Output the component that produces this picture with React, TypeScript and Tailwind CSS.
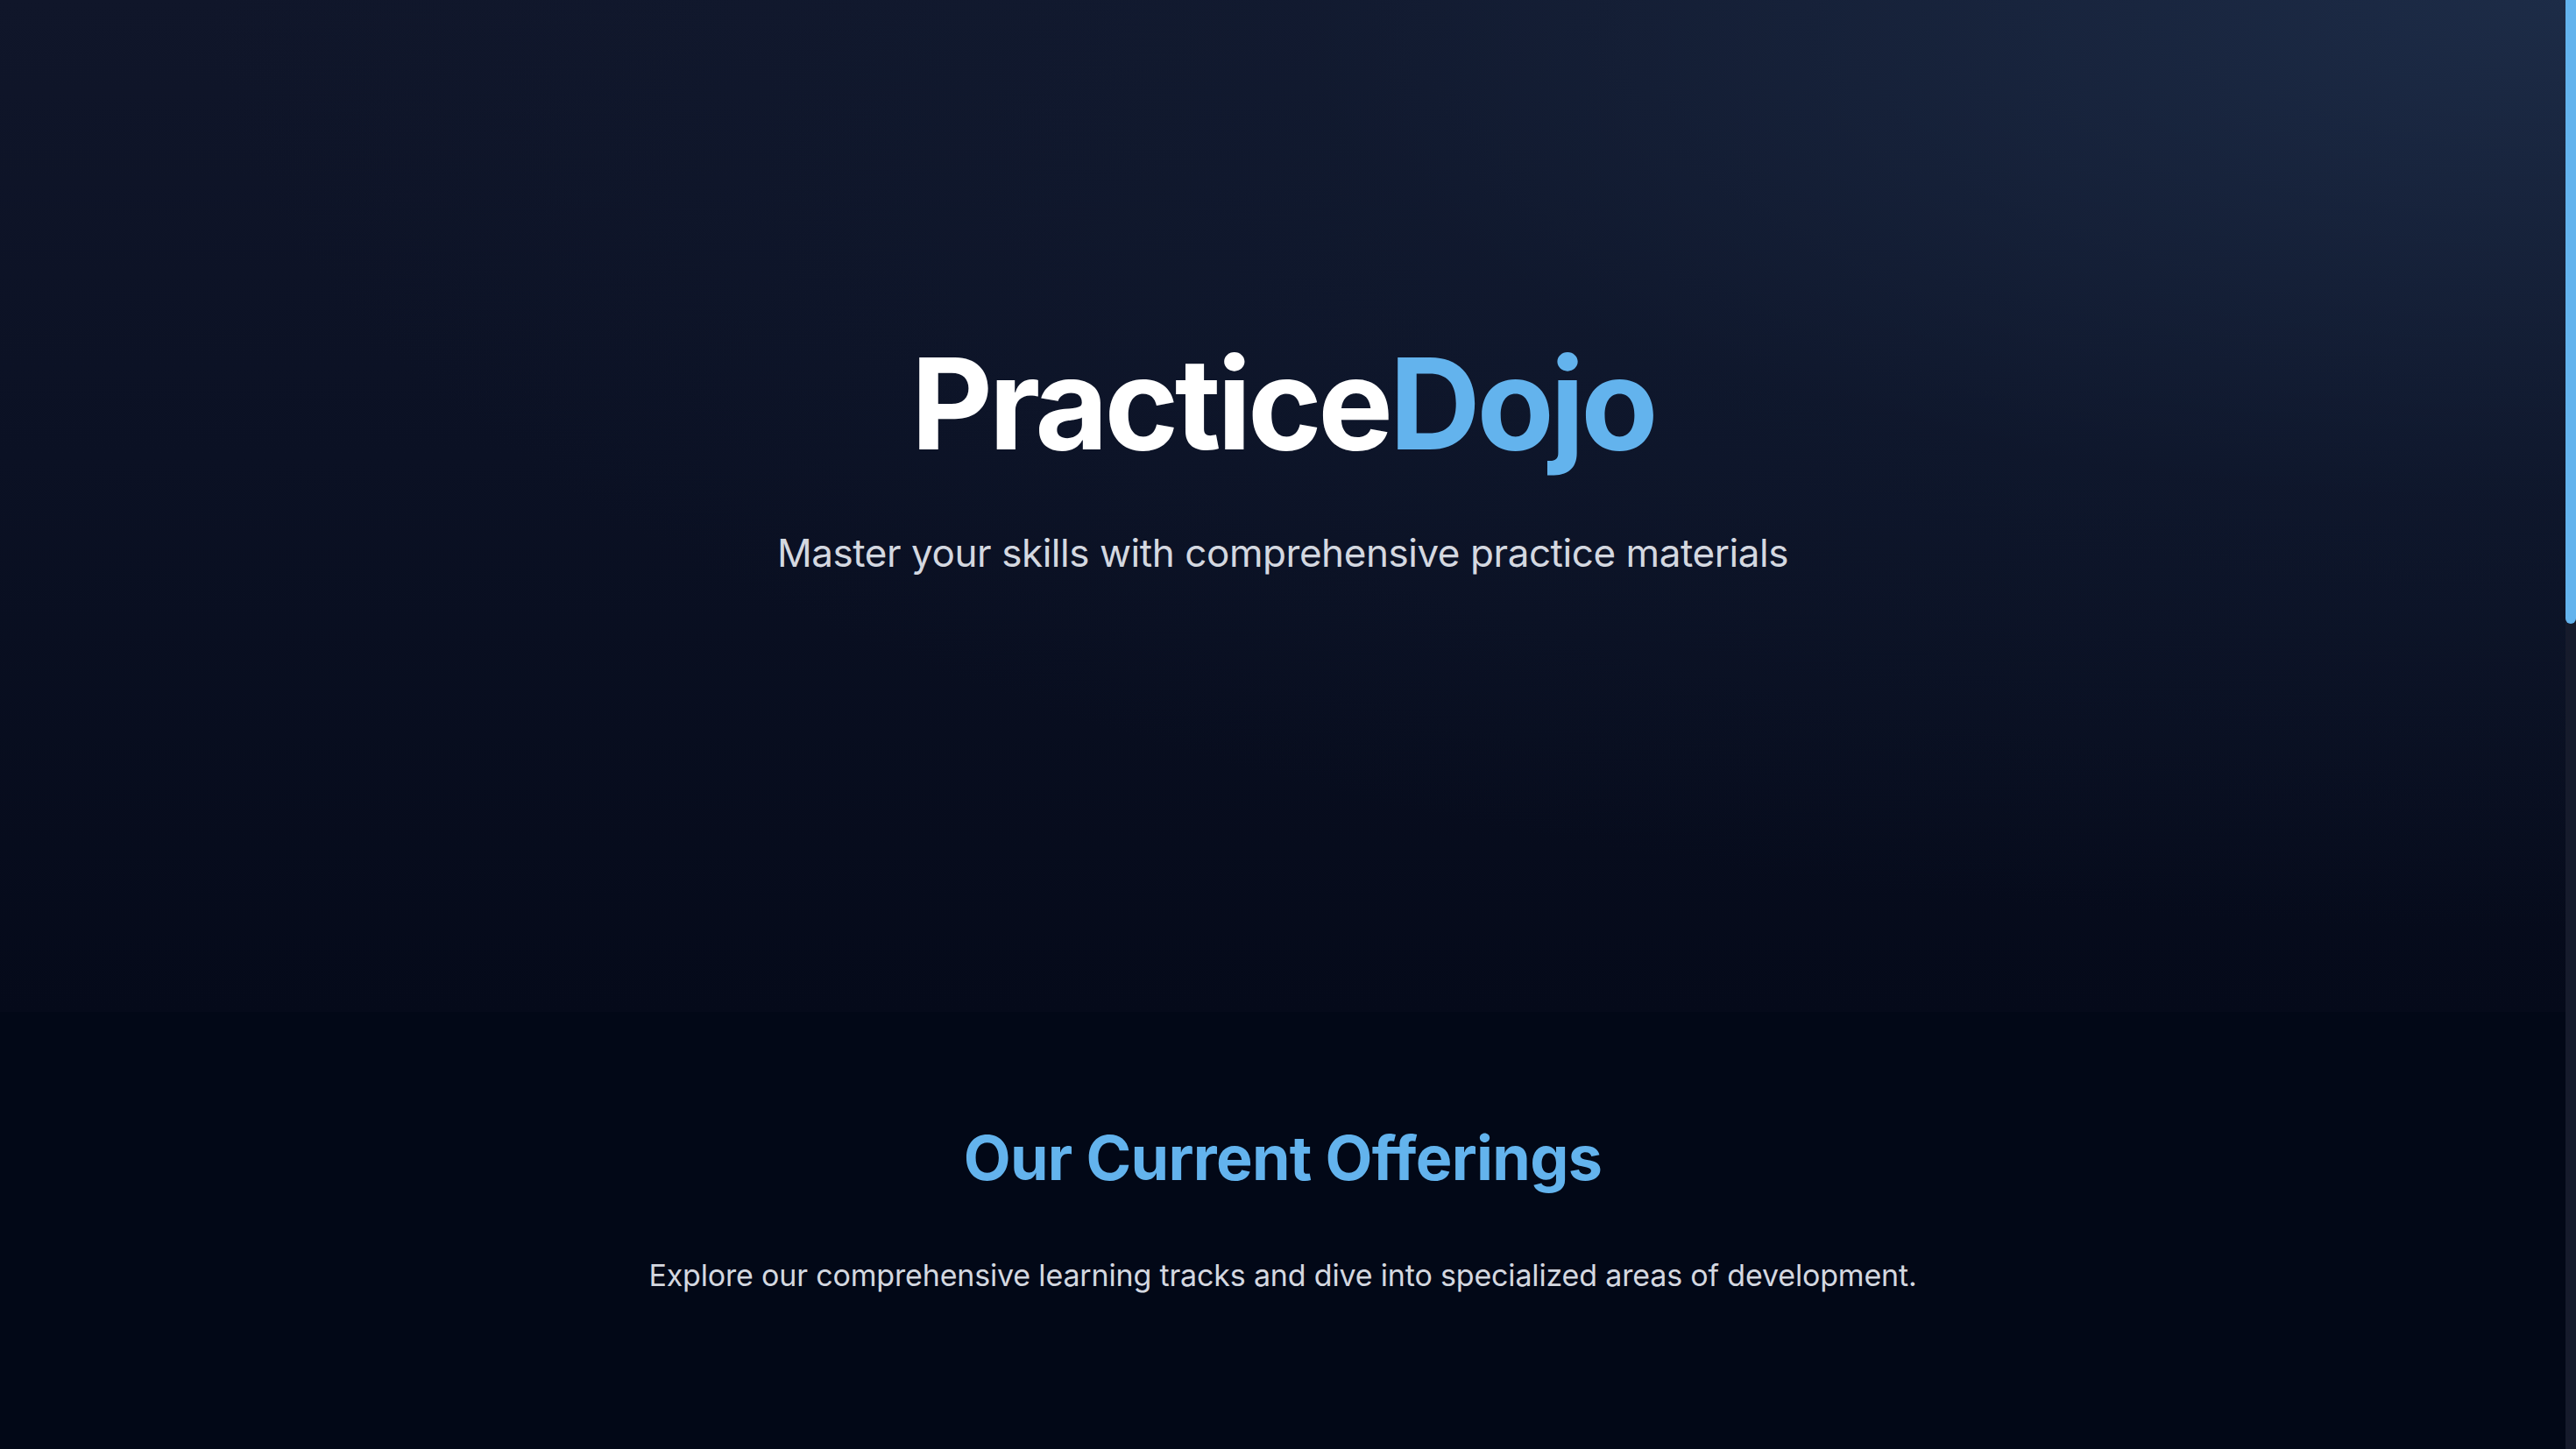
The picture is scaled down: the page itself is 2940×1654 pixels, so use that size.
import React from 'react';

const font = { fontFamily: 'Inter, "Noto Sans", sans-serif' };

function Hero() {
  return (
    <section className="h-[1155px] bg-[radial-gradient(ellipse_at_top_right,rgba(30,46,74,0.9)_0%,rgba(20,32,56,0.4)_35%,transparent_65%),linear-gradient(to_bottom,#10162a_0%,#0b1124_45%,#050a1a_100%)] flex flex-col items-center pt-[375px]">
      <h1 className="text-[144px] font-bold leading-[1.2] tracking-[-0.03em] text-white">
        Practice<span className="text-[#63b3ed]">Dojo</span>
      </h1>
      <p className="mt-[53px] text-[44px] leading-[1.4] tracking-[-0.01em] text-[#d4d8e0]">
        Master your skills with comprehensive practice materials
      </p>
    </section>
  );
}

function Offerings() {
  return (
    <section className="flex flex-col items-center pt-[125px] pb-[120px]">
      <h2 className="text-[70px] font-bold leading-[1.2] tracking-[-0.01em] text-[#63b3ed]">Our Current Offerings</h2>
      <p className="mt-[66px] text-[34px] leading-[1.5] tracking-[-0.005em] text-[#d4d8e0]">
        Explore our comprehensive learning tracks and dive into specialized areas of development.
      </p>
    </section>
  );
}

export default function App() {
  return (
    <div className="flex h-[1654px] w-full overflow-hidden bg-[#020817]" style={font}>
      <main className="flex-1 min-w-0">
        <Hero />
        <Offerings />
      </main>
      {/* scrollbar */}
      <div className="w-[12px] bg-[#161b2c] flex flex-col">
        <div className="h-[712px] rounded-b-[6px] bg-[#63b3ed]" />
      </div>
    </div>
  );
}
